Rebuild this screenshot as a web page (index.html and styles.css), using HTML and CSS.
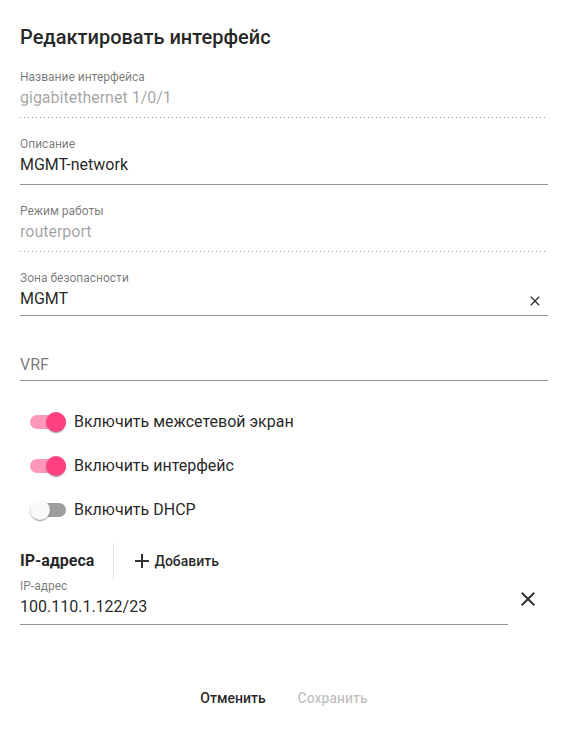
FILE: index.html
```html
<!DOCTYPE html>
<html lang="ru">
<head>
<meta charset="utf-8">
<link rel="stylesheet" href="styles.css">
</head>
<body>
<div class="dialog">
  <h1 class="title">Редактировать интерфейс</h1>

  <div class="field field-first">
    <div class="label">Название интерфейса</div>
    <div class="value disabled">gigabitethernet 1/0/1</div>
    <div class="underline dotted"></div>
  </div>

  <div class="field">
    <div class="label">Описание</div>
    <div class="value">MGMT-network</div>
    <div class="underline"></div>
  </div>

  <div class="field">
    <div class="label">Режим работы</div>
    <div class="value disabled">routerport</div>
    <div class="underline dotted"></div>
  </div>

  <div class="field select">
    <div class="label">Зона безопасности</div>
    <div class="value value-row">
      <span>MGMT</span>
      <svg class="clear-small" viewBox="0 0 24 24" width="16" height="16"><path d="M19 6.41L17.59 5 12 10.59 6.41 5 5 6.41 10.59 12 5 17.59 6.41 19 12 13.41 17.59 19 19 17.59 13.41 12z" fill="#333"/></svg>
    </div>
    <div class="underline"></div>
  </div>

  <div class="field select vrf">
    <div class="label">&nbsp;</div>
    <div class="value placeholder">VRF</div>
    <div class="underline"></div>
  </div>

  <div class="toggles">
    <div class="toggle-row">
      <span class="toggle on"><span class="track"></span><span class="thumb"></span></span>
      <span class="toggle-label">Включить межсетевой экран</span>
    </div>
    <div class="toggle-row">
      <span class="toggle on"><span class="track"></span><span class="thumb"></span></span>
      <span class="toggle-label">Включить интерфейс</span>
    </div>
    <div class="toggle-row">
      <span class="toggle"><span class="track"></span><span class="thumb"></span></span>
      <span class="toggle-label">Включить DHCP</span>
    </div>
  </div>

  <div class="ip-header">
    <span class="ip-title">IP-адреса</span>
    <span class="divider"></span>
    <span class="add-btn">
      <svg viewBox="0 0 24 24" width="24" height="24"><path d="M19 13h-6v6h-2v-6H5v-2h6V5h2v6h6v2z" fill="#333"/></svg>
      <span>Добавить</span>
    </span>
  </div>

  <div class="ip-row">
    <div class="field ip-field">
      <div class="label">IP-адрес</div>
      <div class="value">100.110.1.122/23</div>
      <div class="underline"></div>
    </div>
    <span class="icon-btn">
      <svg viewBox="0 0 24 24" width="24" height="24"><path d="M19 6.41L17.59 5 12 10.59 6.41 5 5 6.41 10.59 12 5 17.59 6.41 19 12 13.41 17.59 19 19 17.59 13.41 12z" fill="#333"/></svg>
    </span>
  </div>

  <div class="actions">
    <span class="btn">Отменить</span>
    <span class="btn btn-disabled">Сохранить</span>
  </div>
</div>
</body>
</html>
```

FILE: styles.css
```css
html, body {
  margin: 0;
  padding: 0;
  background: #fff;
}
body {
  font-family: Roboto, "Noto Sans", sans-serif;
  color: rgba(0, 0, 0, 0.87);
}
.dialog {
  width: 528px;
  padding: 21px 22px 0 20px;
}
.title {
  margin: 0;
  font-size: 20px;
  line-height: 32px;
  font-weight: 500;
  color: rgba(0, 0, 0, 0.87);
}
.field {
  display: flex;
  flex-direction: column;
  margin-top: 19px;
}
.field-first {
  margin-top: 17px;
}
.label {
  font-size: 12px;
  line-height: 14px;
  color: rgba(0, 0, 0, 0.54);
}
.value {
  margin-top: 4px;
  font-size: 16px;
  line-height: 20px;
  color: rgba(0, 0, 0, 0.87);
  padding-bottom: 9px;
}
.select .value {
  padding-bottom: 6px;
}
.vrf .value {
  margin-top: 6px;
  padding-bottom: 5px;
}
.value.disabled {
  color: rgba(0, 0, 0, 0.38);
}
.value.placeholder {
  color: rgba(0, 0, 0, 0.54);
}
.value-row {
  display: flex;
  align-items: center;
  justify-content: space-between;
}
.clear-small {
  margin-right: 5px;
  margin-top: 3px;
}
.underline {
  height: 1px;
  background: rgba(0, 0, 0, 0.42);
}
.underline.dotted {
  background: linear-gradient(to right, rgba(0, 0, 0, 0.42) 0%, rgba(0, 0, 0, 0.42) 33%, transparent 0%);
  background-size: 4px 1px;
  background-repeat: repeat-x;
}
.toggles {
  display: flex;
  flex-direction: column;
  gap: 20px;
  margin-top: 29px;
  padding-left: 10px;
}
.toggle-row {
  display: flex;
  align-items: center;
  height: 24px;
}
.toggle {
  position: relative;
  width: 36px;
  height: 24px;
  display: inline-block;
  flex: none;
}
.track {
  position: absolute;
  left: 0;
  top: 5px;
  width: 36px;
  height: 14px;
  border-radius: 8px;
  background: rgba(0, 0, 0, 0.38);
}
.thumb {
  position: absolute;
  top: 2px;
  left: 0;
  width: 20px;
  height: 20px;
  border-radius: 50%;
  background: #fafafa;
  box-shadow: 0 2px 1px -1px rgba(0,0,0,.2), 0 1px 1px 0 rgba(0,0,0,.14), 0 1px 3px 0 rgba(0,0,0,.12);
}
.toggle.on .track {
  background: rgba(255, 64, 129, 0.54);
}
.toggle.on .thumb {
  left: 16px;
  background: #ff4081;
}
.toggle-label {
  margin-left: 8px;
  font-size: 16px;
  line-height: 20px;
}
.ip-header {
  display: flex;
  align-items: center;
  height: 36px;
  margin-top: 21px;
}
.ip-title {
  font-size: 16px;
  font-weight: 700;
  line-height: 20px;
}
.divider {
  width: 1px;
  height: 36px;
  background: rgba(0, 0, 0, 0.12);
  margin-left: 19px;
  margin-right: 12px;
}
.add-btn {
  display: flex;
  align-items: center;
  gap: 0;
  padding: 0 8px 0 4px;
  font-size: 14px;
  font-weight: 500;
  line-height: 36px;
}
.ip-row {
  display: flex;
  align-items: center;
}
.ip-field {
  flex: 1;
  margin-top: 0;
}
.ip-field .value {
  padding-bottom: 7px;
}
.icon-btn {
  width: 40px;
  height: 40px;
  display: flex;
  align-items: center;
  justify-content: center;
  margin-top: -6px;
}
.actions {
  display: flex;
  justify-content: center;
  gap: 0;
  margin-top: 55px;
}
.btn {
  padding: 0 16px;
  min-width: 64px;
  font-size: 14px;
  font-weight: 500;
  line-height: 36px;
  color: rgba(0, 0, 0, 0.87);
}
.btn-disabled {
  color: rgba(0, 0, 0, 0.26);
}
```
